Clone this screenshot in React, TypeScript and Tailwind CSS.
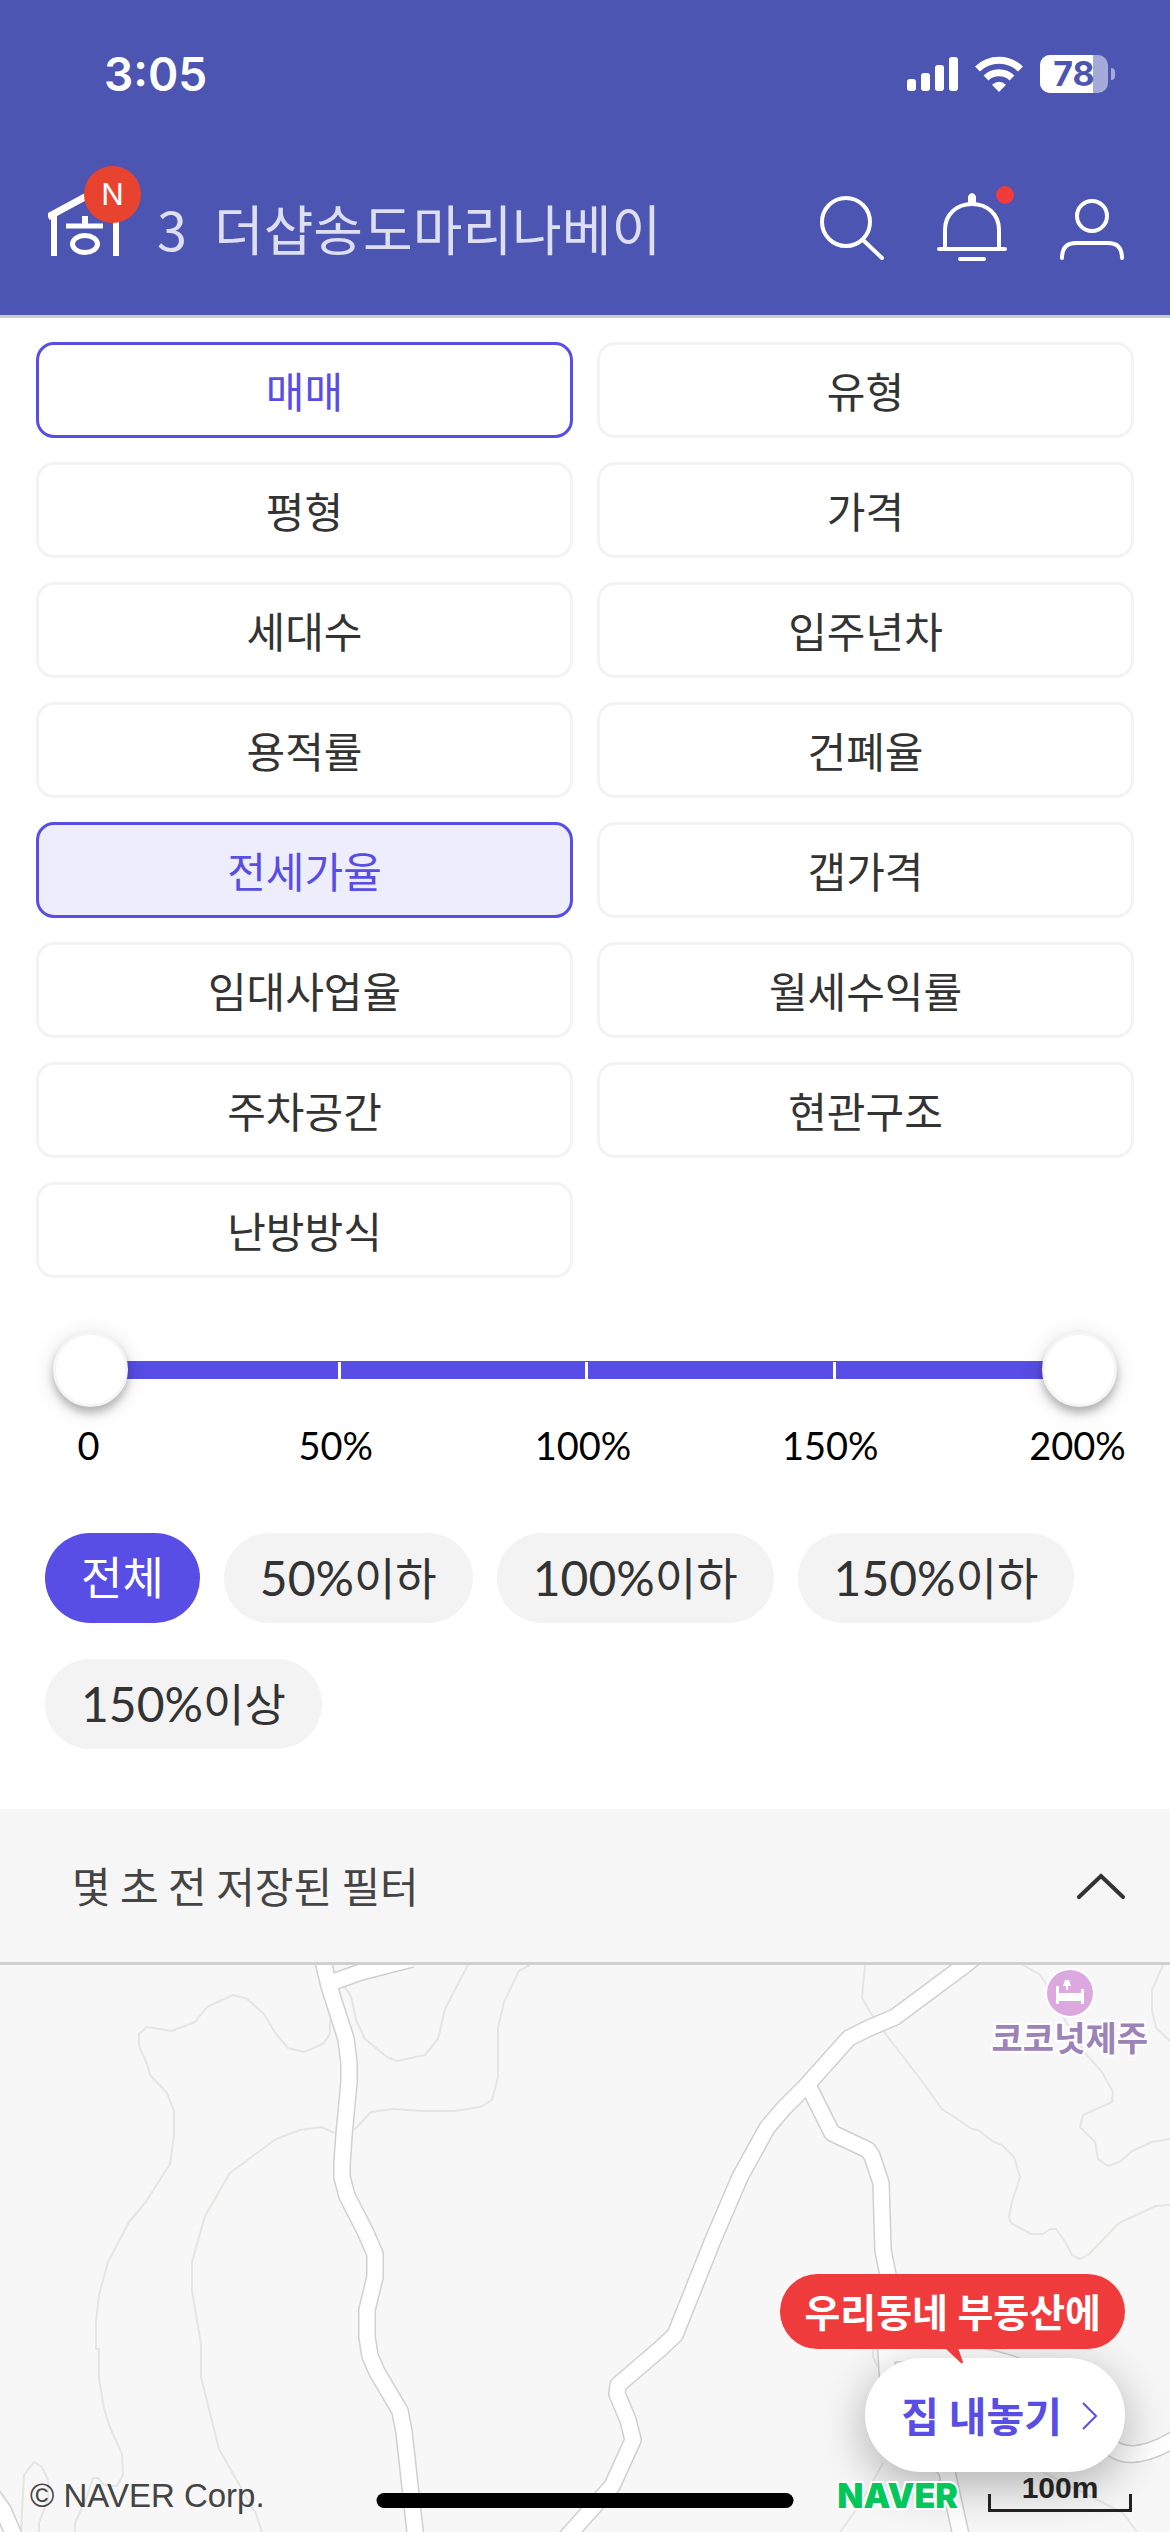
import React, { useState } from "react";

const filters = [
  "매매", "유형", "평형", "가격", "세대수", "입주년차", "용적률", "건폐율",
  "전세가율", "갭가격", "임대사업율", "월세수익률", "주차공간", "현관구조", "난방방식",
];

const ranges = [
  { percent: "", label: "전체" },
  { percent: "50%", label: "이하" },
  { percent: "100%", label: "이하" },
  { percent: "150%", label: "이하" },
  { percent: "150%", label: "이상" },
];
const marks = ["0", "50%", "100%", "150%", "200%"];

const contours = [
  "M330 55V69L323 79L304 87L288 83L276 69L264 49L247 34L233 30L207 42L195 57L172 66L147 62L139 69V81L147 99L150 110L167 128L174 146V170L170 199L145 238L129 257L108 297L99 330L96 357V384H99V414L104 443L109 460L122 489L123 510L117 521L104 520L98 513H93L86 534L75 558V567",
  "M335 168L321 162L300 165L276 174L230 208L205 251L192 297V326L201 379V412L219 484L256 549L262 567",
  "M344 21L351 31L356 55L365 74L387 92L397 96L425 90L438 74L445 44L468 0",
  "M354 165L371 147L393 144L423 146H455L480 142L492 135L498 112V63L504 37L519 6L530 0",
  "M21 567L24 510L34 497L42 502L48 515V534L39 558V567",
  "M865 0L862 33L872 50L884 67L921 115L942 144L972 164L978 165L994 177L1002 180L1014 192L1020 212L1012 237L1009 252L1011 258L1031 269L1043 269L1050 264L1056 264L1066 278L1072 290L1080 294L1089 289L1119 258L1156 241L1170 240",
  "M1023 0L1039 9L1045 17L1066 57L1085 88L1102 107L1113 127L1112 137L1083 150L1080 162L1095 177L1098 194L1108 201L1121 196L1132 186L1152 177L1170 174",
  "M1163 0L1152 25V45L1156 63L1170 76",
  "M883 498L872 518L856 545L840 567",
  "M873 384V392L878 402",
  "M1043 507L1123 548L1137 567",
];

const roads = [
  "M320 -12L324 0L329 21L346 74L349 98V117L344 170L342 199V212L347 231L365 266L375 289V312L367 345V372L370 391L377 407L400 446L404 467L416 575",
  "M333 17L361 7L412 -6",
  "M985 -16L965 0L895 52L867 64L849 73L840 83L807 120L784 143L767 163L740 212L713 275L675 370L660 384L618 420L617 429L628 455L633 475L612 521L564 575",
  "M807 118L832 168L868 185L872 191L881 218L883 285L891 325L886 385L888 418L947 507L962 575",
  "M886 390Q960 380 1020 402T1105 475Q1125 505 1180 471",
  "M-12 524L3 545L16 575",
];

function Signal() {
  return (
    <svg width="51" height="34" viewBox="0 0 51 34" fill="#fff" aria-hidden="true">
      <rect x="0" y="22" width="9" height="12" rx="3" />
      <rect x="14" y="16" width="9" height="18" rx="3" />
      <rect x="28" y="8" width="9" height="26" rx="3" />
      <rect x="42" y="0" width="9" height="34" rx="3" />
    </svg>
  );
}

function Wifi() {
  return (
    <svg width="48" height="36" viewBox="0 0 48 36" aria-hidden="true">
      <g fill="none" stroke="#fff" strokeWidth="7">
        <path d="M2.500 13A31 31 0 0 1 45.500 13" />
        <path d="M11 22A19 19 0 0 1 37 22" />
      </g>
      <path d="M24 36L17 28.800Q24 22.500 31 28.800Z" fill="#fff" />
    </svg>
  );
}

function Battery() {
  return (
    <div className="flex items-center gap-[3px]">
      <div className="relative flex h-[38px] w-[68px] items-center justify-center rounded-[10px] bg-[#a6aad8]">
        <div className="absolute inset-y-0 left-0 w-[53px] rounded-l-[10px] bg-white" />
        <span className="relative font-['Inter'] text-[34px] font-bold leading-[38px] text-[#4c55b1]">78</span>
      </div>
      <div className="h-3 w-1 rounded-r-full bg-[#a6aad8]" />
    </div>
  );
}

function Logo() {
  return (
    <svg width="74" height="64" viewBox="0 0 74 64" fill="none" stroke="#fff" className="block" aria-hidden="true">
      <path d="M0 25L37 5L74 25" strokeWidth="7" />
      <path d="M6 22V64M68 22V64" strokeWidth="6" />
      <path d="M37 24V33" strokeWidth="6" />
      <path d="M18 34H55" strokeWidth="5" />
      <ellipse cx="37" cy="52" rx="12.500" ry="8.500" strokeWidth="5" />
    </svg>
  );
}

function Thumb({ side }: { side: "left" | "right" }) {
  return (
    <span
      className={
        "pointer-events-none absolute top-0 size-[75px] rounded-full border-[3px] border-[#f5f5f5] bg-white shadow-[0_6px_9px_rgba(0,0,0,0.25),0_3px_24px_rgba(0,0,0,0.12)] " +
        (side === "left" ? "left-0" : "right-0")
      }
    />
  );
}

function RangeSlider() {
  return (
    <div className="px-[53px] pt-[54px]">
      <div className="relative h-[75px]">
        <div className="absolute inset-x-[37px] top-[29px] h-[18px] bg-[#584de4]">
          <div className="grid h-full grid-cols-4 pt-px">
            <i />
            <i className="border-l-[3px] border-white" />
            <i className="border-l-[3px] border-white" />
            <i className="border-l-[3px] border-white" />
          </div>
        </div>
        <input type="range" aria-label="최소 전세가율" min="0" max="200" defaultValue="0" className="absolute inset-y-0 left-0 w-1/2 opacity-0" />
        <input type="range" aria-label="최대 전세가율" min="0" max="200" defaultValue="200" className="absolute inset-y-0 right-0 w-1/2 opacity-0" />
        <Thumb side="left" />
        <Thumb side="right" />
      </div>
      <div className="-ml-[88px] -mr-[84px] mt-4 flex text-center font-['Lato'] text-[38px] leading-[44px] text-black">
        {marks.map((m) => (
          <span key={m} className="flex-1">{m}</span>
        ))}
      </div>
    </div>
  );
}

function MapCanvas() {
  return (
    <svg className="absolute inset-0 h-full w-full" viewBox="0 0 1170 567" preserveAspectRatio="xMidYMin slice" fill="none" strokeLinejoin="round" aria-hidden="true">
      <g stroke="#e6e5e2" strokeWidth="2">
        {contours.map((d) => <path key={d} d={d} />)}
      </g>
      <g stroke="#d0d0d0" strokeWidth="18">
        {roads.map((d) => <path key={d} d={d} />)}
      </g>
      <g stroke="#fff" strokeWidth="15">
        {roads.map((d) => <path key={d} d={d} />)}
      </g>
    </svg>
  );
}

export default function App() {
  const [open, setOpen] = useState("전세가율");
  const [range, setRange] = useState(0);
  return (
    <div className="flex min-h-screen flex-col bg-white font-['Lato','Noto_Sans_CJK_KR',sans-serif] text-[#333]">
      <header className="border-b-[3px] border-[#ccc] bg-[#4c55b1] text-white">
        <div className="flex h-[148px] items-center justify-between pl-[104px] pr-[55px]">
          <span className="font-['Inter'] text-[46px] font-semibold leading-none">3:05</span>
          <div className="flex items-center gap-[17px]">
            <Signal />
            <Wifi />
            <Battery />
          </div>
        </div>
        <div className="flex h-[167px] items-center justify-between pb-2 pl-12 pr-[42px]">
          <div className="flex items-center">
            <a href="#" aria-label="홈" className="relative pb-2">
              <Logo />
              <span className="absolute -top-[26px] left-9 flex size-[57px] items-center justify-center rounded-full bg-[#e8432e] font-['Inter'] text-[30px] leading-none">N</span>
            </a>
            <div className="ml-[35px] flex gap-[27px] font-['Noto_Sans_CJK_KR',sans-serif] text-[54px] leading-[64px] text-[#dddeef]">
              <span>3</span>
              <span>더샵송도마리나베이</span>
            </div>
          </div>
          <div className="flex items-center gap-12">
            <button aria-label="검색">
              <svg width="72" height="72" viewBox="0 0 72 72" fill="none" stroke="#fff" strokeWidth="4" strokeLinecap="round">
                <circle cx="30" cy="30" r="24" />
                <path d="M47 48L66 66" />
              </svg>
            </button>
            <button aria-label="알림" className="relative">
              <svg width="72" height="72" viewBox="0 0 72 72" fill="none" stroke="#fff" strokeWidth="4" strokeLinecap="round">
                <path d="M9 56V38C9 22 21 12 36 12S63 22 63 38V56M3 57H69M24 67H48" />
                <path d="M34 12V5Q36 1 38 5V12" />
              </svg>
              <span className="absolute -top-[6px] right-[-6px] size-[18px] rounded-full bg-[#f03b3c]" />
            </button>
            <button aria-label="내 정보">
              <svg width="72" height="72" viewBox="0 0 72 72" fill="none" stroke="#fff" strokeWidth="4" strokeLinecap="round">
                <circle cx="36" cy="24" r="15" />
                <path d="M6 66C6 56 11 51 20 51H52C61 51 66 56 66 66" />
              </svg>
            </button>
          </div>
        </div>
      </header>

      <main className="flex flex-1 flex-col">
        <div className="grid grid-cols-2 gap-6 px-9 pt-6">
          {filters.map((f) => (
            <button
              key={f}
              onClick={() => setOpen(f)}
              className={
                "h-24 rounded-[18px] border-[3px] pt-1 text-[42px] leading-none " +
                (f === open
                  ? "border-[#584de4] bg-[#eeedfc] text-[#584de4]"
                  : f === "매매"
                    ? "border-[#584de4] bg-white text-[#584de4]"
                    : "border-[#f3f3f3] bg-white")
              }
            >
              {f}
            </button>
          ))}
        </div>

        <RangeSlider />

        <div className="flex flex-wrap gap-x-6 gap-y-9 px-[45px] pb-[60px] pt-[66px]">
          {ranges.map((r, i) => (
            <button
              key={r.percent + r.label}
              onClick={() => setRange(i)}
              className={"h-[90px] rounded-full px-9 text-[45px] leading-none " + (i === range ? "bg-[#584de4] text-white" : "bg-[#f3f3f3]")}
            >
              {r.percent && <span className="text-[48px] leading-none">{r.percent}</span>}
              {r.label}
            </button>
          ))}
        </div>

        <button className="flex h-[156px] items-center justify-between border-b-[3px] border-[#d0d0d0] bg-[#f6f6f6] pl-[72px] pr-[45px] text-[42px] text-[#444]">
          <span className="pb-0.5 font-['Noto_Sans_CJK_KR',sans-serif]">몇 초 전 저장된 필터</span>
          <svg width="48" height="26" viewBox="0 0 48 26" fill="none" stroke="#333" strokeWidth="4" strokeLinecap="round" aria-hidden="true">
            <path d="M2 24L24 3L46 24" />
          </svg>
        </button>

        <section aria-label="지도" className="relative min-h-[567px] flex-1 overflow-hidden bg-[#f7f7f7]">
          <MapCanvas />
          <div className="absolute right-[22px] top-[3px] flex flex-col items-center">
            <svg width="50" height="50" viewBox="0 0 50 50" aria-hidden="true">
              <circle cx="25" cy="25" r="24" fill="#dba9e0" stroke="#fff" strokeWidth="2" />
              <path d="M11 18h3v7h22v-4h3v15h-3v-3H14v3h-3zM20 12h4l2 6h-3v4h-2v-4h-3z" fill="#fff" />
            </svg>
            <span className="text-[34px] font-bold leading-10 text-[#9c82b6] [paint-order:stroke] [-webkit-text-stroke:4px_white]">코코넛제주</span>
          </div>

          <span className="absolute bottom-4 left-[30px] font-['Liberation_Sans'] text-[33px] leading-10 text-[#444]">© NAVER Corp.</span>
          <span className="absolute bottom-6 left-1/2 h-[15px] w-[417px] -translate-x-1/2 rounded-full bg-black" />

          <div className="absolute bottom-[60px] right-[45px] flex flex-col items-end">
            <div className="relative z-10 flex h-[75px] items-center rounded-full bg-[#f03b3c] px-6 pt-0.5 text-[39px] font-bold leading-none text-white">
              우리동네 부동산에
              <svg className="absolute -bottom-[15px] left-[165px]" width="20" height="16" viewBox="0 0 20 16" aria-hidden="true">
                <path d="M0 0H13L18 14Q18 16 16 15Z" fill="#f03b3c" />
              </svg>
            </div>
            <button className="mt-[9px] flex h-[114px] items-center gap-5 rounded-full bg-white pl-9 pr-[27px] pt-0.5 text-[41px] font-bold leading-none text-[#584de4] shadow-[0_12px_48px_rgba(0,0,0,0.3)]">
              집 내놓기
              <svg width="16" height="30" viewBox="0 0 16 30" fill="none" stroke="#584de4" strokeWidth="2" aria-hidden="true">
                <path d="M1 2L14 15L1 28" />
              </svg>
            </button>
          </div>

          <div className="absolute bottom-5 right-[38px] flex items-end gap-[30px]">
            <span className="font-['Inter'] text-[34px] font-black leading-8 text-[#03c75a] [paint-order:stroke] [-webkit-text-stroke:4px_white]">NAVER</span>
            <div className="w-[144px] text-center font-['Liberation_Sans'] text-[30px] font-bold leading-none text-[#222]">
              <div className="-mb-[9px]">100m</div>
              <div className="h-[18px] border-x-[3px] border-b-[3px] border-[#222]" />
            </div>
          </div>
        </section>
      </main>
    </div>
  );
}
